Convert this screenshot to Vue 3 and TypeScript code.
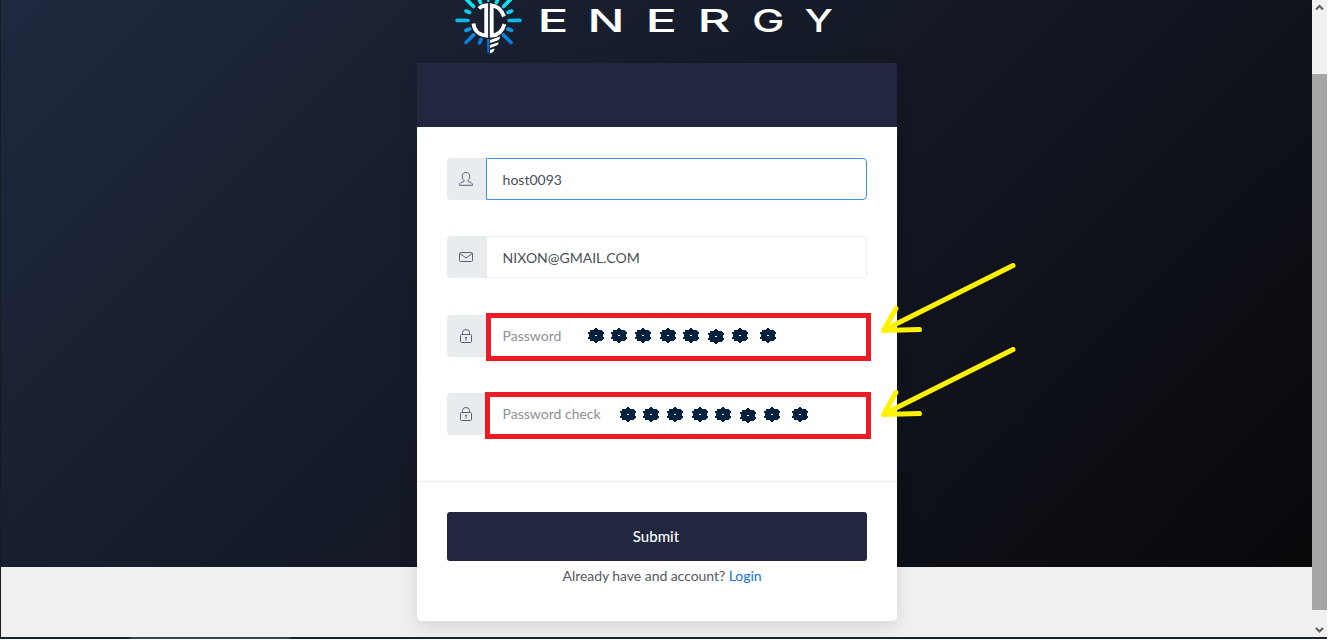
<script setup lang="ts">
interface Letter { ch: string; x: number; w: number }
interface Field { icon: 'user' | 'mail' | 'lock'; label: string; placeholder?: boolean; focused?: boolean }

const letters: Letter[] = [
  { ch: 'E', x: 537.5, w: 31 },
  { ch: 'N', x: 587.5, w: 37 },
  { ch: 'E', x: 645.5, w: 31.5 },
  { ch: 'R', x: 697.5, w: 33 },
  { ch: 'G', x: 752, w: 32.5 },
  { ch: 'Y', x: 804.5, w: 28.5 },
]
const fields: Field[] = [
  { icon: 'user', label: 'host0093', focused: true },
  { icon: 'mail', label: 'NIXON@GMAIL.COM' },
  { icon: 'lock', label: 'Password', placeholder: true },
  { icon: 'lock', label: 'Password check', placeholder: true },
]
const flowers = [
  [588, 328], [611, 328], [635, 328], [660, 328], [683, 328], [708, 329], [732, 328], [760, 328],
  [620, 407], [643, 407], [667, 407], [692, 407], [715, 407], [740, 408], [764, 407], [792, 407],
]
</script>

<template>
  <div class="screen">
    <div class="viewport">
      <main class="page">
        <div class="hero"></div>
        <svg class="brand" width="1311" height="63" viewBox="1 0 1311 63">
          <defs>
            <linearGradient id="ray" gradientUnits="userSpaceOnUse" x1="0" y1="0" x2="0" y2="50">
              <stop offset="0" stop-color="#08f0f4" />
              <stop offset=".4" stop-color="#0cb9ec" />
              <stop offset="1" stop-color="#0864d8" />
            </linearGradient>
          </defs>
          <g stroke="url(#ray)" stroke-width="3.6" stroke-linecap="round" fill="none">
            <path d="M457 20.400L468 20.500M509 20.500L520 20.400M466 11l3.500 1.500M511.500 11l-3.500 1.500M466 30.500l3.500-1.500M511.500 30.500l-3.500-1.500M466-1l7.500 7.500M511-1l-7.500 7.500M466 42.500l7.500-7.500M511 42.500l-7.500-7.500M479-1l1.500 3.500M498-1l-1.500 3.500M479.500 43l1.500-3.500" />
            <path d="M488.300-2v3M488.300 40v12.500" stroke-width="2.200" />
          </g>
          <g fill="none" stroke="#fff" stroke-width="3.800">
            <path d="M479 8.500q3-3 7.200-3.200v30.300C478.500 35 474 30 473.500 23.500" />
            <path d="M504 16.500C501.500 9.500 497 5.800 491.700 5.300v30.300c6-.3 10.500-4 12.800-11.500" />
          </g>
          <path fill="#fff" d="M490 40l10-3.500c.3 2-1 3.500-3 4.200L490 43zM490 45l8.500-2.800c.3 2-1 3-2.500 3.500L490 48zM490 50l4.500-1.500c0 2.500-2 4.500-4.500 5z" />
          <text v-for="l in letters" :key="l.x" :x="l.x" y="32" :textLength="l.w" lengthAdjust="spacingAndGlyphs">{{ l.ch }}</text>
        </svg>
        <section class="card">
          <header class="card-head"></header>
          <form class="fields" @submit.prevent>
            <div v-for="f in fields" :key="f.label" class="group">
              <span class="addon">
                <svg width="16" height="16" viewBox="0 0 16 16">
                  <path v-if="f.icon === 'user'" d="M6 9.500C3.500 7.500 3.300 1.500 8 1.500s4.500 6 2 8v1c2.500.7 4.500 1.200 4.500 3.800h-13c0-2.600 2-3.100 4.500-3.800z" />
                  <path v-else-if="f.icon === 'mail'" d="M2.500 3.500h11q1 0 1 1v7q0 1-1 1h-11q-1 0-1-1v-7q0-1 1-1zM2 4.500l6 4.500 6-4.500" />
                  <template v-else>
                    <path d="M3.500 6.500h9q1 0 1 1v6q0 1-1 1h-9q-1 0-1-1v-6q0-1 1-1zM4.500 6.500V4.500a3.500 3 0 0 1 7 0v2" />
                    <path d="M7 9.500h2M8 9.500v3" />
                  </template>
                </svg>
              </span>
              <div class="input" :class="{ focused: f.focused, placeholder: f.placeholder }">{{ f.label }}</div>
            </div>
          </form>
          <footer class="actions">
            <button type="button">Submit</button>
            <p>Already have and account? <a>Login</a></p>
          </footer>
        </section>
      </main>
      <aside class="scrollbar">
        <svg width="15" height="74" viewBox="0 0 15 74"><path d="M4 9.500l3.500-3.500L11 9.500" /></svg>
        <div class="thumb"></div>
        <svg width="15" height="27" viewBox="0 0 15 27"><path d="M4 18l3.500 3.500L11 18" /></svg>
      </aside>
    </div>
    <div class="taskbar"><span></span></div>
    <svg class="marks" width="1328" height="640" viewBox="0 0 1328 640">
      <defs>
        <path id="flower" d="M7 0h2v1h1v1h4v1h1v1h1v2h-1v3h1v2h-1v1h-1v1h-4v1h-1v1H7v-1H6v-1H2v-2H0V9h1V6H0V4h2V2h4V1h1z" />
      </defs>
      <g class="boxes">
        <rect x="488.500" y="315.500" width="380" height="43" />
        <rect x="487.500" y="394.500" width="381" height="42" />
      </g>
      <g class="flowers">
        <g v-for="p in flowers" :key="p.join('-')">
          <use href="#flower" :x="p[0]" :y="p[1]" />
          <rect :x="p[0] + 7" :y="p[1] + 7" width="2" height="1" />
        </g>
      </g>
      <g class="arrows">
        <path d="M1013 265.500L884 330M896 308.500L883.500 330.500L919.500 329.500" />
        <path d="M1013 349.500L884 414M896 392.500L883.500 414.500L919.500 413.500" />
      </g>
    </svg>
  </div>
</template>

<style>
body { margin: 0; background: #fff; overflow: hidden; }
</style>

<style scoped>
.screen { position: relative; width: 1328px; height: 640px; overflow: hidden; font-family: Lato, "Liberation Sans", sans-serif; }
.viewport { display: flex; box-sizing: border-box; width: 1327px; height: 637px; border-left: 1px solid #171b24; }
.page { position: relative; width: 1311px; height: 637px; overflow: hidden; background: #f0f0f0; }
.hero { position: absolute; top: 0; left: 0; width: 1311px; height: 567px; background: linear-gradient(135deg, #1f283e 0%, #09090c 100%); }
.brand { position: relative; display: block; }
.brand text { font: 500 31.600px Inter, sans-serif; fill: #fff; }
.card { position: relative; width: 480px; height: 558px; margin: 0 auto 0 416px; background: #fff; border-radius: 5px; box-shadow: 0 6px 18px rgba(0, 0, 0, .11); }
.card-head { height: 64px; background: #20273f; }
.fields { display: flex; flex-direction: column; gap: 36.300px; padding: 31px 30px 46px; border-bottom: 1px solid #ebedf2; }
.group { display: flex; height: 42px; }
.addon { display: flex; align-items: center; justify-content: center; box-sizing: border-box; width: 39px; padding-right: 1px; background: #e9ecef; border-radius: 4px 0 0 4px; }
.addon svg { fill: none; stroke: #5c6270; stroke-width: 1; }
.input { flex: 1; box-sizing: border-box; padding-left: 15.600px; border: 1px solid #ebedf2; border-left-color: #e9ecef; border-radius: 0 4px 4px 0; color: #495057; font-size: 14px; line-height: 42px; }
.focused { border-color: #3f92f0; }
.placeholder { color: #8d9096; line-height: 40px; }
.actions { padding: 30px 30px 0; }
button { display: block; width: 100%; height: 49px; padding: 0 2px 0 0; border: 0; border-radius: 3px; background: #20273f; color: #fff; font: 500 15px Lato, sans-serif; }
p { margin: 4px 0 0; padding-left: 10px; color: #575962; font-size: 14px; line-height: 21px; letter-spacing: -.05px; text-align: center; }
a { color: #1572e8; }
.scrollbar { display: flex; flex-direction: column; width: 15px; background: #f0f0f0; }
.scrollbar svg { fill: none; stroke: #606060; stroke-width: 2.200; }
.thumb { height: 536px; background: #a6a6a6; }
.taskbar { width: 1327px; height: 2px; padding-left: 130px; box-sizing: border-box; background: #182230; }
.taskbar span { display: block; width: 160px; height: 2px; background: #34414e; }
.marks { position: absolute; top: 0; left: 0; pointer-events: none; }
.boxes rect { fill: none; stroke: #ed1c24; stroke-width: 5; }
.flowers { fill: #00213f; shape-rendering: crispEdges; }
.flowers rect { fill: #fff; }
.arrows { fill: none; stroke: #fff200; stroke-width: 5; stroke-linecap: round; stroke-linejoin: round; }
</style>
